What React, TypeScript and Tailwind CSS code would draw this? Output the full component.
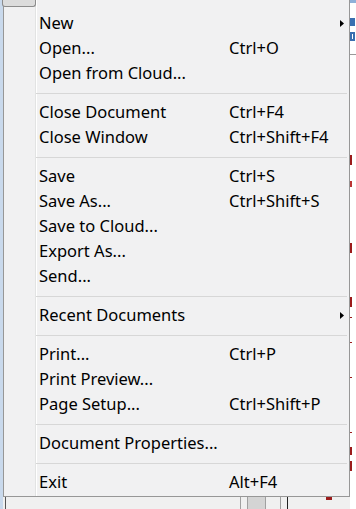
import React from 'react'

type Item =
  | { kind: 'item'; label: string; shortcut?: string; submenu?: boolean }
  | { kind: 'sep' }

const ITEMS: Item[] = [
  { kind: 'item', label: 'New', submenu: true },
  { kind: 'item', label: 'Open...', shortcut: 'Ctrl+O' },
  { kind: 'item', label: 'Open from Cloud...' },
  { kind: 'sep' },
  { kind: 'item', label: 'Close Document', shortcut: 'Ctrl+F4' },
  { kind: 'item', label: 'Close Window', shortcut: 'Ctrl+Shift+F4' },
  { kind: 'sep' },
  { kind: 'item', label: 'Save', shortcut: 'Ctrl+S' },
  { kind: 'item', label: 'Save As...', shortcut: 'Ctrl+Shift+S' },
  { kind: 'item', label: 'Save to Cloud...' },
  { kind: 'item', label: 'Export As...' },
  { kind: 'item', label: 'Send...' },
  { kind: 'sep' },
  { kind: 'item', label: 'Recent Documents', submenu: true },
  { kind: 'sep' },
  { kind: 'item', label: 'Print...', shortcut: 'Ctrl+P' },
  { kind: 'item', label: 'Print Preview...' },
  { kind: 'item', label: 'Page Setup...', shortcut: 'Ctrl+Shift+P' },
  { kind: 'sep' },
  { kind: 'item', label: 'Document Properties...' },
  { kind: 'sep' },
  { kind: 'item', label: 'Exit', shortcut: 'Alt+F4' },
]

function SubmenuArrow() {
  return (
    <svg width="4" height="7" viewBox="0 0 4 7" className="block">
      <path d="M0 0 L4 3.5 L0 7 Z" fill="#000" />
    </svg>
  )
}

function MenuRow({ item }: { item: Item }) {
  if (item.kind === 'sep') {
    return (
      <div className="flex h-[14px] items-center">
        <div className="ml-[32px] mr-[2px] h-px flex-1 bg-[#d7d7d7]" />
      </div>
    )
  }
  return (
    <div className="flex h-[25px] items-center">
      <span className="w-[225px] pl-[35px] whitespace-nowrap">{item.label}</span>
      <span className="flex-1 whitespace-nowrap">{item.shortcut}</span>
      {item.submenu && (
        <span className="mr-[5px]">
          <SubmenuArrow />
        </span>
      )}
    </div>
  )
}

export default function App() {
  return (
    <div className="relative h-[509px] w-[356px] overflow-hidden bg-[#f4f4f4]">
      {/* Underlying window, mostly hidden by the popup */}
      <div className="flex h-full">
        <div className="w-[3px] bg-[#c9d9ec]" />
        <div className="flex flex-1 flex-col">
          <div className="flex-1 bg-white" />
          <div className="flex h-[12px] items-stretch bg-[#f0f0f0]">
            <div className="ml-[2px] w-px bg-[#555]" />
            <div className="ml-[234px] w-px bg-[#a0a0a0]" />
            <div className="ml-[6px] w-[19px] border-x border-[#a0a0a0] bg-[#d4d4d4]" />
            <div className="ml-[14px] w-px bg-[#a0a0a0]" />
            <div className="ml-[6px] w-px bg-[#222]" />
            <div className="ml-[38px] h-[3px] w-[6px] bg-[#9b1b1b]" />
          </div>
        </div>
        <div className="flex w-[6px] flex-col bg-white">
          <div className="h-[3px] bg-[#8fb0d8]" />
          <div className="mt-[15px] h-[8px] w-[5px] bg-[#3a6fb0]" />
          <div className="mt-[6px] h-[9px] w-[5px] border-2 border-[#3a6fb0]" />
          <div className="mt-[13px] h-px bg-[#999]" />
          <div className="mt-[100px] h-[10px] w-[2px] bg-[#9b1b1b]" />
          <div className="mt-[16px] h-[6px] w-[2px] bg-[#b33]" />
          <div className="mt-[56px] h-[10px] w-[2px] bg-[#9b1b1b]" />
          <div className="mt-[44px] h-[10px] w-[2px] bg-[#9b1b1b]" />
          <div className="mt-[10px] h-px w-[2px] bg-[#9b1b1b]" />
          <div className="mt-[24px] h-px w-[2px] bg-[#9b1b1b]" />
          <div className="mt-[34px] h-px w-[2px] bg-[#9b1b1b]" />
          <div className="mt-[54px] h-px w-[2px] bg-[#9b1b1b]" />
          <div className="mt-[14px] h-[8px] w-[2px] bg-[#9b1b1b]" />
          <div className="mt-[6px] h-[10px] w-[2px] bg-[#9b1b1b]" />
        </div>
      </div>

      {/* Popup file menu */}
      <div
        className="absolute left-[3px] top-0 h-[497px] w-[347px] border border-t-0 border-[#979797] bg-[#f1f1f2] text-[16.5px] text-black"
        style={{ fontFamily: '"Noto Sans", "Open Sans", sans-serif' }}
      >
        <div className="absolute bottom-0 left-[31px] top-0 w-px bg-[#e2e3e3]" />
        <div className="absolute bottom-0 left-[32px] top-0 w-px bg-white" />
        <div className="relative flex flex-col pt-[11px]">
          {ITEMS.map((item, i) => (
            <MenuRow key={i} item={item} />
          ))}
        </div>
      </div>

      {/* File button tab above the menu */}
      <div className="absolute left-[2px] top-0 h-[7px] w-[34px] rounded-b-[3px] border border-t-0 border-[#8c8c8c] bg-[#dcdcdc]" />
    </div>
  )
}
